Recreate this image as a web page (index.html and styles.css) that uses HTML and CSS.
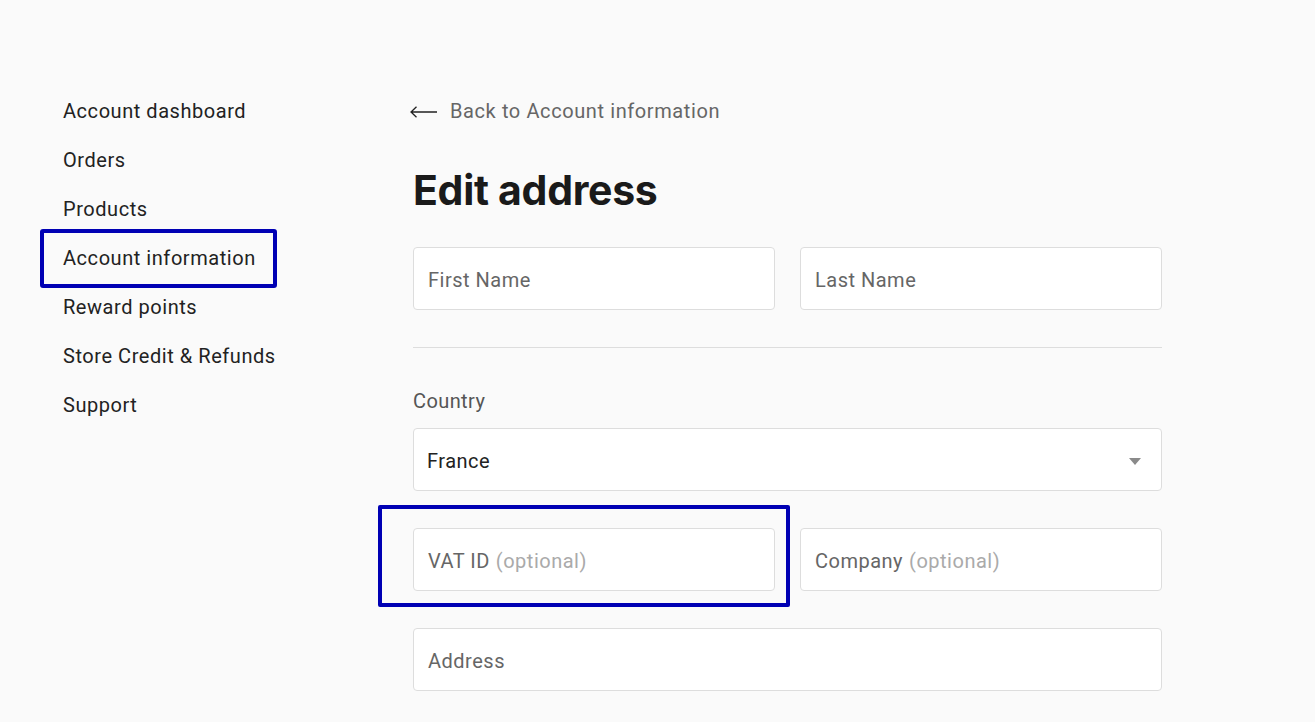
FILE: index.html
```html
<!DOCTYPE html>
<html lang="en">
<head>
    <meta charset="UTF-8">
    <meta name="viewport" content="width=device-width, initial-scale=1.0">
    <title>Edit address</title>
    <link rel="stylesheet" href="styles.css">
</head>
<body>

    <div class="page">

        <!-- Account menu -->
        <ul class="side-nav">
            <li><a href="#">Account dashboard</a></li>
            <li><a href="#">Orders</a></li>
            <li><a href="#">Products</a></li>
            <li><a href="#" class="marked">Account information</a></li>
            <li><a href="#">Reward points</a></li>
            <li><a href="#">Store Credit &amp; Refunds</a></li>
            <li><a href="#">Support</a></li>
        </ul>

        <!-- Address form -->
        <div class="content">
            <a href="#" class="back-link">
                <svg width="28" height="12" viewBox="0 0 28 12">
                    <path d="M27 6H1M6.5 0.8L1 6l5.5 5.2" fill="none" stroke="#222" stroke-width="1.3"/>
                </svg>
                Back to Account information
            </a>

            <h1>Edit address</h1>

            <div class="row">
                <div class="field">First Name</div>
                <div class="field">Last Name</div>
            </div>

            <hr class="divider">

            <div class="label">Country</div>
            <div class="field select">
                France
                <svg width="12" height="7" viewBox="0 0 12 7">
                    <path d="M0 0h12L6 7z" fill="#8a8a8a"/>
                </svg>
            </div>

            <div class="row">
                <div class="field marked">VAT ID <span class="optional">(optional)</span></div>
                <div class="field">Company <span class="optional">(optional)</span></div>
            </div>

            <div class="field">Address</div>
        </div>

    </div>

</body>
</html>
```

FILE: styles.css
```css
/* Base */
body {
    margin: 0;
    background-color: #fafafa;
    font-family: Roboto, 'Liberation Sans', sans-serif;
    color: #222;
}

.page {
    display: flex;
    padding: 87px 0 0 63px;
}

/* Side menu */
.side-nav {
    list-style: none;
    margin: 0;
    padding: 0;
    width: 350px;
    flex-shrink: 0;
}

.side-nav a {
    position: relative;
    display: inline-block;
    line-height: 49px;
    font-size: 20px;
    letter-spacing: 0.55px;
    color: #222;
    text-decoration: none;
}

/* Blue highlight boxes */
.marked {
    position: relative;
}

.side-nav .marked::after {
    content: '';
    position: absolute;
    left: -23px;
    right: -21px;
    top: -5px;
    bottom: -5px;
    border: 4px solid #0000b4;
    border-radius: 3px;
}

.field.marked::after {
    content: '';
    position: absolute;
    left: -36px;
    right: -16px;
    top: -24px;
    bottom: -17px;
    border: 4px solid #0000b4;
    border-radius: 2px;
}

/* Form column */
.content {
    width: 749px;
}

.back-link {
    display: flex;
    align-items: center;
    gap: 12px;
    margin-left: -3px;
    line-height: 49px;
    font-size: 20px;
    letter-spacing: 0.6px;
    color: #666;
    text-decoration: none;
}

h1 {
    margin: 29px 0 32px;
    font-family: Inter, 'Noto Sans', sans-serif;
    font-size: 41px;
    line-height: 50px;
    font-weight: 700;
    letter-spacing: -0.3px;
    color: #1a1a1a;
}

.row {
    display: flex;
    gap: 25px;
}

.row .field {
    flex: 1;
}

.field {
    box-sizing: border-box;
    height: 63px;
    display: flex;
    align-items: center;
    padding: 3px 14px 0;
    gap: 6px;
    background-color: #fff;
    border: 1px solid #ddd;
    border-radius: 4px;
    font-size: 20px;
    letter-spacing: 0.5px;
    color: #666;
}

.optional {
    color: #aaa;
}

.divider {
    border: none;
    border-top: 1px solid #ddd;
    margin: 37px 0 41px;
}

.label {
    line-height: 24px;
    font-size: 20px;
    letter-spacing: 0.4px;
    color: #555;
    margin-bottom: 15px;
}

.select {
    justify-content: space-between;
    padding-left: 13px;
    padding-right: 20px;
    color: #222;
    margin-bottom: 37px;
}

.row + .field {
    margin-top: 37px;
}
```
